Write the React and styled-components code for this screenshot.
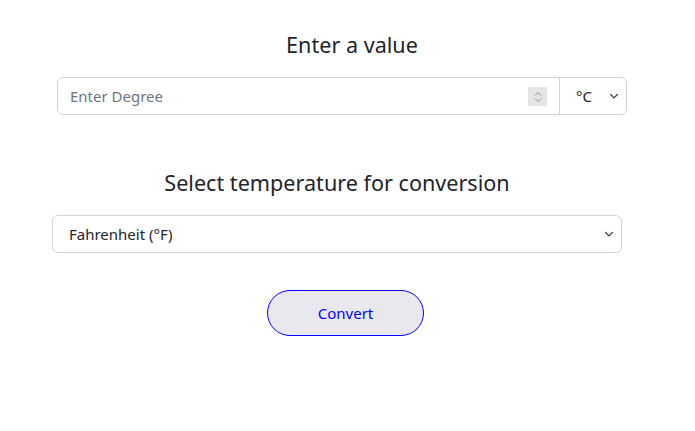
import React from "react";
import styled, { createGlobalStyle } from "styled-components";

const Global = createGlobalStyle`
  html, body { margin: 0; padding: 0; background: #fff; }
  body { font-family: "Noto Sans", "Open Sans", sans-serif; color: #212529; }
  * { box-sizing: border-box; }
`;

const Page = styled.div`
  width: 695px;
  height: 431px;
  display: flex;
  flex-direction: column;
  padding-top: 30px;
`;

const Heading = styled.h2`
  margin: 0;
  font-weight: 400;
  font-size: 21.6px;
  line-height: 30px;
  text-align: center;
  width: 570px;
  margin-left: ${(p) => p.$left}px;
`;

const Group = styled.div`
  display: flex;
  width: 570px;
  height: 38px;
  margin-left: 57px;
  margin-top: 17px;
`;

const InputWrap = styled.div`
  position: relative;
  flex: 1;
  display: flex;
`;

const Input = styled.input`
  flex: 1;
  height: 38px;
  border: 1px solid #ced4da;
  border-radius: 6px 0 0 6px;
  padding: 0 12px;
  font-family: inherit;
  font-size: 15px;
  color: #212529;
  outline: none;
  &::placeholder { color: #6c757d; }
`;

const Spinner = styled.div`
  position: absolute;
  right: 13px;
  top: 10px;
  width: 19px;
  height: 19px;
  background: #e6e6e9;
  display: flex;
  align-items: center;
  justify-content: center;
`;

const UnitSelect = styled.div`
  width: 68px;
  height: 38px;
  border: 1px solid #ced4da;
  margin-left: -1px;
  border-radius: 0 6px 6px 0;
  display: flex;
  align-items: center;
  justify-content: space-between;
  padding: 0 6px 0 16px;
  font-size: 15px;
  color: #212529;
`;

const Spacer = styled.div`
  height: ${(p) => p.$h}px;
`;

const Select = styled.div`
  width: 570px;
  height: 38px;
  margin-left: 52px;
  margin-top: 17px;
  border: 1px solid #ced4da;
  border-radius: 6px;
  display: flex;
  align-items: center;
  justify-content: space-between;
  padding: 0 6px 0 16px;
  font-size: 15px;
  color: #212529;
`;

const Button = styled.button`
  width: 157px;
  height: 46px;
  margin-left: 267px;
  margin-top: 37px;
  border: 1px solid #0000ff;
  border-radius: 23px;
  background: #e9e8ee;
  color: #0000ff;
  font-family: inherit;
  font-size: 15px;
  padding: 0;
`;

const Chevron = () => (
  <svg width="12" height="12" viewBox="0 0 16 16">
    <path d="M3.5 6l4.5 4.5L12.5 6" fill="none" stroke="#343a40" strokeWidth="1.6" strokeLinecap="round" strokeLinejoin="round" />
  </svg>
);

const SpinIcon = () => (
  <svg width="10" height="14" viewBox="0 0 10 14">
    <path d="M2 5.5L5 2.5l3 3M2 8.5l3 3 3-3" fill="none" stroke="#8a8a8f" strokeWidth="1" />
  </svg>
);

export default function App() {
  return (
    <>
      <Global />
      <Page>
        <Heading $left={67}>Enter a value</Heading>
        <Group>
          <InputWrap>
            <Input type="text" placeholder="Enter Degree" />
            <Spinner><SpinIcon /></Spinner>
          </InputWrap>
          <UnitSelect>
            <span>°C</span>
            <Chevron />
          </UnitSelect>
        </Group>
        <Spacer $h={53} />
        <Heading $left={52}>Select temperature for conversion</Heading>
        <Select>
          <span>Fahrenheit (°F)</span>
          <Chevron />
        </Select>
        <Button>Convert</Button>
      </Page>
    </>
  );
}
